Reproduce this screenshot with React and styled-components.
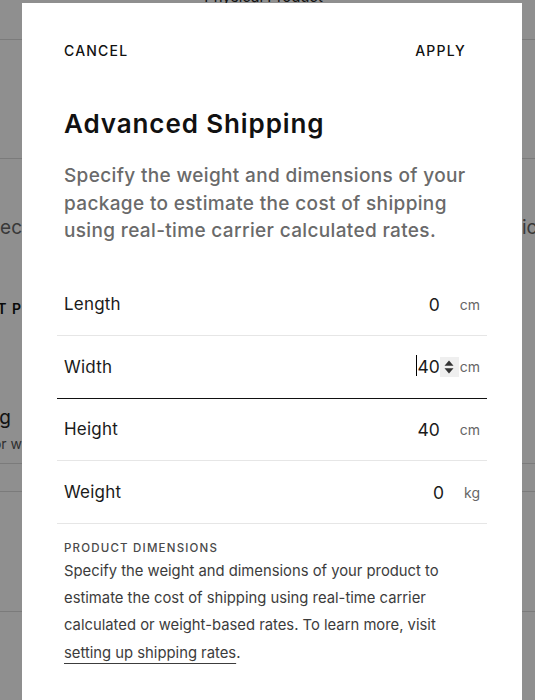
import React from "react";
import styled, { createGlobalStyle } from "styled-components";

const Global = createGlobalStyle`
  html, body { margin: 0; padding: 0; height: 100%; overflow: hidden; background: #fff; }
  body { font-family: Inter, "Noto Sans", Arial, sans-serif; -webkit-font-smoothing: antialiased; }
  * { box-sizing: border-box; }
`;

/* ---------- background page ---------- */
const BgPage = styled.div`
  width: 100%;
  height: 700px;
  background: #fff;
  display: flex;
  flex-direction: column;
`;

const BgTop = styled.div`
  height: 40px;
  border-bottom: 1px solid #dcdcdc;
  display: flex;
  justify-content: center;
  align-items: flex-start;
`;

const BgTitle = styled.div`
  font-size: 15px;
  line-height: 15px;
  margin-top: -11px;
  margin-left: -8px;
  color: #222;
`;

const BgBlock = styled.div`
  height: ${(p) => p.$h}px;
  border-bottom: ${(p) => (p.$line ? "1px solid #dcdcdc" : "none")};
  display: flex;
  flex-direction: column;
  justify-content: flex-start;
`;

const BgRow = styled.div`
  display: flex;
  justify-content: space-between;
  align-items: center;
  white-space: nowrap;
  overflow: hidden;
  margin-top: ${(p) => p.$mt || 0}px;
`;

const BgFrag = styled.div`
  width: ${(p) => p.$w}px;
  display: flex;
  justify-content: ${(p) => (p.$end ? "flex-end" : "flex-start")};
  font-size: ${(p) => p.$size}px;
  font-weight: ${(p) => p.$weight || 400};
  letter-spacing: ${(p) => p.$ls || 0}px;
  color: ${(p) => p.$color || "#333"};
  line-height: 1.2;
`;

/* ---------- overlay + modal ---------- */
const Overlay = styled.div`
  position: fixed;
  inset: 0;
  background: rgba(0, 0, 0, 0.44);
  display: flex;
  align-items: flex-start;
  padding-left: 22px;
`;

const Modal = styled.div`
  width: 500px;
  margin-top: 3px;
  min-height: 720px;
  background: #fff;
  padding: 0 35px;
  color: #111;
`;

const Header = styled.div`
  display: flex;
  justify-content: space-between;
  padding: 38px 7px 0;
`;

const HeaderButton = styled.button`
  border: 0;
  background: none;
  padding: 0 ${(p) => (p.$right ? "14px" : "0")} 0 0;
  font-family: inherit;
  font-size: 14px;
  line-height: 20px;
  font-weight: 500;
  letter-spacing: 1.2px;
  color: #111;
  cursor: pointer;
`;

const Title = styled.h1`
  margin: 47px 7px 0;
  font-size: 26px;
  line-height: 32px;
  font-weight: 600;
  letter-spacing: 0.9px;
  color: #111;
`;

const Lead = styled.p`
  margin: 22px 7px 0;
  font-size: 19px;
  line-height: 27.5px;
  font-weight: 500;
  letter-spacing: 0.35px;
  color: #6a6a6a;
`;

const Fields = styled.div`
  margin-top: 29px;
  display: flex;
  flex-direction: column;
`;

const FieldRow = styled.div`
  height: 62.6px;
  display: flex;
  align-items: center;
  justify-content: space-between;
  padding: 0 7px;
  border-bottom: 1px solid ${(p) => (p.$focused ? "#111" : "#e6e6e6")};
`;

const Label = styled.span`
  font-size: 17px;
  letter-spacing: 0.2px;
  color: #1a1a1a;
`;

const ValueGroup = styled.div`
  display: flex;
  align-items: center;
`;

const Value = styled.span`
  position: relative;
  font-size: 17.5px;
  color: #1a1a1a;
`;

const Caret = styled.span`
  position: absolute;
  left: -1px;
  top: -1px;
  width: 1px;
  height: 21px;
  background: #000;
`;

const SpinSlot = styled.span`
  width: 19px;
  height: 20px;
  display: flex;
  align-items: center;
  justify-content: center;
  background: ${(p) => (p.$show ? "#efefef" : "transparent")};
`;

const Unit = styled.span`
  font-size: 14px;
  color: #666;
  margin-left: 1px;
`;

const Info = styled.div`
  padding: 16px 7px 0;
`;

const InfoLabel = styled.div`
  font-size: 11.5px;
  line-height: 16px;
  letter-spacing: 1.2px;
  text-transform: uppercase;
  color: #4a4a4a;
  font-weight: 500;
`;

const InfoText = styled.p`
  margin: 2px 0 0;
  font-size: 14.8px;
  line-height: 27.3px;
  color: #3c3c3c;
`;

const InfoLink = styled.a`
  color: #3c3c3c;
  text-decoration: underline;
  text-underline-offset: 5px;
  text-decoration-thickness: 1px;
`;

const Spinner = () => (
  <svg width="12" height="16" viewBox="0 0 12 16">
    <path d="M6 1.5 L10.5 6.8 H1.5 Z" fill="#333" />
    <path d="M6 14.5 L10.5 9.2 H1.5 Z" fill="#333" />
  </svg>
);

const fields = [
  { label: "Length", value: "0", unit: "cm" },
  { label: "Width", value: "40", unit: "cm", focused: true },
  { label: "Height", value: "40", unit: "cm" },
  { label: "Weight", value: "0", unit: "kg" },
];

export default function App() {
  return (
    <>
      <Global />
      <BgPage>
        <BgTop>
          <BgTitle>Physical Product</BgTitle>
        </BgTop>
        <BgBlock $h={119} $line />
        <BgBlock $h={305} $line>
          <BgRow $mt={58}>
            <BgFrag $w={22} $end $size={19} $color="#666">Spec</BgFrag>
            <BgFrag $w={13} $size={19} $color="#666">ic</BgFrag>
          </BgRow>
          <BgRow $mt={61}>
            <BgFrag $w={22} $end $size={14} $weight={600} $ls={1} $color="#111">UNIT P</BgFrag>
          </BgRow>
          <BgRow $mt={89}>
            <BgFrag $w={11} $end $size={19} $color="#222">Shipping</BgFrag>
          </BgRow>
          <BgRow $mt={7}>
            <BgFrag $w={22} $end $size={14} $color="#555">Calculated or w</BgFrag>
          </BgRow>
        </BgBlock>
        <BgBlock $h={28} $line />
        <BgBlock $h={120} $line />
      </BgPage>
      <Overlay>
        <Modal>
          <Header>
            <HeaderButton>CANCEL</HeaderButton>
            <HeaderButton $right>APPLY</HeaderButton>
          </Header>
          <Title>Advanced Shipping</Title>
          <Lead>
            Specify the weight and dimensions of your package to estimate the
            cost of shipping using real-time carrier calculated rates.
          </Lead>
          <Fields>
            {fields.map((f) => (
              <FieldRow key={f.label} $focused={f.focused}>
                <Label>{f.label}</Label>
                <ValueGroup>
                  <Value>
                    {f.focused && <Caret />}
                    {f.value}
                  </Value>
                  <SpinSlot $show={f.focused}>{f.focused && <Spinner />}</SpinSlot>
                  <Unit>{f.unit}</Unit>
                </ValueGroup>
              </FieldRow>
            ))}
          </Fields>
          <Info>
            <InfoLabel>Product Dimensions</InfoLabel>
            <InfoText>
              Specify the weight and dimensions of your product to estimate the
              cost of shipping using real-time carrier calculated or
              weight-based rates. To learn more, visit{" "}
              <InfoLink href="#">setting up shipping rates</InfoLink>.
            </InfoText>
          </Info>
        </Modal>
      </Overlay>
    </>
  );
}
